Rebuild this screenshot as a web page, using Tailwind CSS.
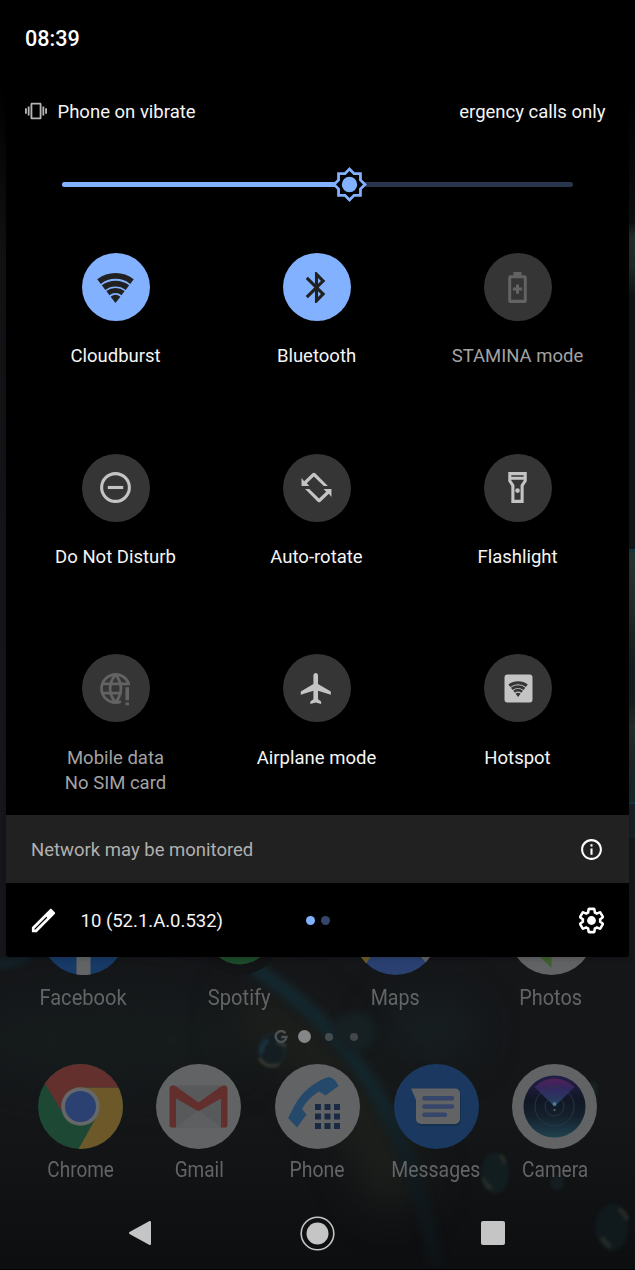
<!DOCTYPE html>
<html lang="en">
  <head>
    <meta charset="UTF-8" />
    <title>Quick Settings</title>
    <meta name="viewport" content="width=device-width, initial-scale=1.0" />
    <script src="https://cdn.jsdelivr.net/npm/@tailwindcss/browser@4"></script>
  </head>

  <body class="bg-black font-[Roboto,sans-serif]">
    <div class="relative w-[635px] h-[1270px] overflow-hidden bg-black">
      <!-- Wallpaper -->
      <svg class="absolute inset-0" width="635" height="1270" viewBox="0 0 635 1270">
        <defs>
          <linearGradient id="base" x1="0" y1="0" x2="0" y2="1">
            <stop offset="0" stop-color="#000" />
            <stop offset="0.06" stop-color="#000" />
            <stop offset="0.2" stop-color="#111214" />
            <stop offset="0.6" stop-color="#15171a" />
            <stop offset="0.88" stop-color="#141618" />
            <stop offset="1" stop-color="#0d0e10" />
          </linearGradient>
          <linearGradient id="streak" gradientUnits="userSpaceOnUse" x1="0" y1="950" x2="0" y2="1270">
            <stop offset="0" stop-color="#14282f" />
            <stop offset="0.5" stop-color="#13242a" />
            <stop offset="0.75" stop-color="#10191d" />
            <stop offset="1" stop-color="#0e1215" />
          </linearGradient>
          <linearGradient id="edge" x1="0" y1="0" x2="0" y2="1">
            <stop offset="0" stop-color="#263430" />
            <stop offset="0.15" stop-color="#232f2c" />
            <stop offset="0.45" stop-color="#151c1f" />
            <stop offset="0.6" stop-color="#161d1f" />
            <stop offset="0.7" stop-color="#222c29" />
            <stop offset="0.85" stop-color="#1a2526" />
            <stop offset="1" stop-color="#17262a" />
          </linearGradient>
          <linearGradient id="edgeTop" x1="0" y1="0" x2="0" y2="1">
            <stop offset="0" stop-color="#202d29" stop-opacity="0" />
            <stop offset="0.2" stop-color="#202d29" />
            <stop offset="0.6" stop-color="#1d2927" />
            <stop offset="1" stop-color="#1d2927" stop-opacity="0" />
          </linearGradient>
          <filter id="soft" x="-50%" y="-50%" width="200%" height="200%" color-interpolation-filters="sRGB"><feGaussianBlur stdDeviation="3.5" /></filter>
          <filter id="haze" x="-50%" y="-100%" width="200%" height="300%" color-interpolation-filters="sRGB"><feGaussianBlur stdDeviation="22" /></filter>
          <filter id="drop" x="-50%" y="-50%" width="200%" height="200%" color-interpolation-filters="sRGB"><feGaussianBlur stdDeviation="1.8" /></filter>
        </defs>
        <rect width="635" height="1270" fill="url(#base)" />
        <ellipse cx="110" cy="1040" rx="150" ry="45" fill="#161b1c" filter="url(#haze)" />
        <path d="M240 1010C310 1030 370 1100 400 1200" stroke="#1d201c" stroke-width="55" fill="none" filter="url(#haze)" />
        <ellipse cx="430" cy="1030" rx="45" ry="30" fill="#182021" filter="url(#haze)" />
        <path d="M235 955C330 1015 405 1090 437 1270" stroke="url(#streak)" stroke-width="15" fill="none" filter="url(#soft)" />
        <path d="M-5 966L30 956" stroke="#132228" stroke-width="10" filter="url(#soft)" />
        <ellipse cx="354" cy="1032" rx="22" ry="20" fill="#162023" filter="url(#soft)" />
        <g filter="url(#drop)" fill="none">
          <ellipse cx="272" cy="1050" rx="13" ry="16" fill="#141d21" stroke="#1b272b" stroke-width="2" />
          <path d="M259 1058q8 12 20 6M277 1042l9 4" stroke="#3c4036" stroke-width="2.500" />
          <path d="M268 1040q-8 7-6 14" stroke="#1a3542" stroke-width="4" />
          <ellipse cx="495" cy="1173" rx="14" ry="21" fill="#121d20" />
          <path d="M483 1178q3 9 9 10M500 1155q5 4 4 9" stroke="#272d28" stroke-width="4" />
          <ellipse cx="557" cy="1182" rx="7" ry="8" fill="#141e20" />
          <ellipse cx="612" cy="1227" rx="17" ry="24" fill="#10191c" />
          <path d="M602 1237q5 9 9 9M619 1209q7 5 8 11" stroke="#242a26" stroke-width="5" />
          <ellipse cx="593" cy="1090" rx="5" ry="9" fill="#182122" />
        </g>
        <!-- strip beside the shade -->
        <rect x="629" y="222" width="6" height="75" fill="url(#edgeTop)" />
        <rect x="629" y="549" width="6" height="3" fill="#14343f" />
        <rect x="629" y="552" width="6" height="250" fill="url(#edge)" />
        <rect x="629" y="802" width="6" height="2" fill="#103643" />
        <rect x="629" y="804" width="6" height="34" fill="#151f24" />
      </svg>

      <!-- Home screen -->
      <div class="relative flex h-full flex-col text-[#626466]">
        <div class="mt-[890px] grid w-[624px] grid-cols-4 ml-[5px]">
          <div class="flex flex-col items-center">
            <svg width="85" height="85" viewBox="0 0 85 85"><circle cx="42.500" cy="42.500" r="42.500" fill="#173a66" /><path d="M35.500 40h14v44.500a42 42 0 0 1-14 0z" fill="#636466" /></svg>
            <span class="mt-[7px] inline-block scale-x-[0.89] text-[22.6px] leading-[32px]">Facebook</span>
          </div>
          <div class="flex flex-col items-center">
            <svg width="85" height="85" viewBox="0 0 85 85"><circle cx="42.500" cy="42.500" r="42.500" fill="#131415" /><circle cx="42.500" cy="42.500" r="32" fill="#1c4b2c" /></svg>
            <span class="mt-[7px] inline-block scale-x-[0.89] text-[22.6px] leading-[32px]">Spotify</span>
          </div>
          <div class="flex flex-col items-center">
            <svg width="85" height="85" viewBox="0 0 85 85">
              <clipPath id="round"><circle cx="42.500" cy="42.500" r="42.500" /></clipPath>
              <g clip-path="url(#round)"><rect width="85" height="85" fill="#2a4070" /><path d="M0 60h22L10 78H0z" fill="#6e5f26" /><path d="M62 60l12 14 11 4V60z" fill="#636466" /></g>
            </svg>
            <span class="mt-[7px] inline-block scale-x-[0.87] text-[22.6px] leading-[32px]">Maps</span>
          </div>
          <div class="flex flex-col items-center">
            <svg width="85" height="85" viewBox="0 0 85 85"><circle cx="42.500" cy="42.500" r="42.500" fill="#616365" /><path d="M42.500 42v36L24 60z" fill="#3f6030" /></svg>
            <span class="mt-[7px] inline-block scale-x-[0.88] text-[22.6px] leading-[32px]">Photos</span>
          </div>
        </div>

        <!-- Page indicator -->
        <div class="mt-[14.5px] ml-[274px] flex h-[16px] items-center">
          <svg width="14" height="14" viewBox="0 0 14 14" fill="none" stroke="#4c5253" stroke-width="2.400"><path d="M11.400 3.200A5.400 5.400 0 1 0 12.500 7H7.200" /></svg>
          <span class="ml-[10px] size-[13px] rounded-full bg-[#858687]"></span>
          <span class="ml-[14px] size-2 rounded-full bg-[#424c50]"></span>
          <span class="ml-[17px] size-2 rounded-full bg-[#424749]"></span>
        </div>

        <!-- Dock -->
        <div class="mt-[19.5px] ml-[21px] grid w-[593px] grid-cols-5">
          <div class="flex flex-col items-center">
            <svg width="85" height="85" viewBox="0 0 85 85">
              <g clip-path="url(#round)">
                <rect width="85" height="85" fill="#1d4834" />
                <path d="M42.500 23.500H85V85H40.500L59 52z" fill="#6c5829" />
                <path d="M7 20L0 0H85V23.500H42.500L23.500 47z" fill="#63302e" />
              </g>
              <circle cx="42.500" cy="42.500" r="19.300" fill="#656769" />
              <circle cx="42.500" cy="42.500" r="15.500" fill="#2b4171" />
            </svg>
            <span class="mt-[5px] inline-block scale-x-[0.84] text-[22.6px] leading-[32px]">Chrome</span>
          </div>
          <div class="flex flex-col items-center">
            <svg width="85" height="85" viewBox="0 0 85 85">
              <circle cx="42.500" cy="42.500" r="42.500" fill="#626365" />
              <rect x="14" y="21.500" width="57" height="42" rx="2" fill="#58595b" />
              <path d="M20 63.500L42.500 46 65 63.500z" fill="#5e5f61" />
              <path d="M13.500 25q0-3.500 3.500-3.500 1.500 0 3 1L42.500 38.600 65 22.500q1.500-1 3-1 3.500 0 3.500 3.500V61a2.500 2.500 0 0 1-2.500 2.500h-4V34.500L42.500 47.300 20 34.500v29h-4a2.500 2.500 0 0 1-2.500-2.500z" fill="#622f2d" />
            </svg>
            <span class="mt-[5px] inline-block scale-x-[0.84] text-[22.6px] leading-[32px]">Gmail</span>
          </div>
          <div class="flex flex-col items-center">
            <svg width="85" height="85" viewBox="0 0 85 85">
              <circle cx="42.500" cy="42.500" r="42.500" fill="#626365" />
              <path d="M13 54L18 44.500Q28 24 49 14.500L54 13Q60 14 63.500 22L50.500 31.500 44 27.500Q33 34 27 45L31.500 50.500 22 63.500z" fill="#24496a" />
              <path d="M40 40h6v6h-6zM49.500 40h6v6h-6zM59 40h6v6h-6zM40 49.500h6v6h-6zM49.500 49.500h6v6h-6zM59 49.500h6v6h-6zM40 59h6v6h-6zM49.500 59h6v6h-6zM59 59h6v6h-6z" fill="#192a42" />
            </svg>
            <span class="mt-[5px] inline-block scale-x-[0.86] text-[22.6px] leading-[32px]">Phone</span>
          </div>
          <div class="flex flex-col items-center">
            <svg width="85" height="85" viewBox="0 0 85 85">
              <circle cx="42.500" cy="42.500" r="42.500" fill="#1b3960" />
              <path d="M18 26.500H62a5 5 0 0 1 5 5V57a5 5 0 0 1-5 5H28a5 5 0 0 1-5-5V37z" fill="#16304f" />
              <path d="M17 24.500H61a5 5 0 0 1 5 5V55a5 5 0 0 1-5 5H27a5 5 0 0 1-5-5V36z" fill="#626365" />
              <path d="M30.500 34.300H58M30.500 42.500H58M30.500 50.700H51" stroke="#36456a" stroke-width="4.600" stroke-linecap="round" />
            </svg>
            <span class="mt-[5px] inline-block scale-x-[0.86] text-[22.6px] leading-[32px]">Messages</span>
          </div>
          <div class="flex flex-col items-center">
            <svg width="85" height="85" viewBox="0 0 85 85">
              <defs>
                <linearGradient id="lens" x1="0" y1="0" x2="0" y2="1"><stop offset="0" stop-color="#241d4b" /><stop offset="0.4" stop-color="#111724" /><stop offset="0.65" stop-color="#14202c" /><stop offset="1" stop-color="#1f414f" /></linearGradient>
                <linearGradient id="beam" x1="0" y1="0" x2="0" y2="1"><stop offset="0" stop-color="#502256" /><stop offset="0.35" stop-color="#342660" /><stop offset="1" stop-color="#204663" /></linearGradient>
              </defs>
              <circle cx="42.500" cy="42.500" r="42.500" fill="#626365" />
              <circle cx="42.500" cy="42.500" r="31" fill="url(#lens)" />
              <path d="M42.500 42.500L22.500 23a28 28 0 0 1 40 0z" fill="url(#beam)" />
              <circle cx="42.500" cy="42.500" r="19.500" fill="none" stroke="#2b3b48" stroke-width="0.800" />
              <circle cx="42.500" cy="42.500" r="9.500" fill="none" stroke="#2b3b48" stroke-width="0.800" />
              <circle cx="42.500" cy="40" r="2" fill="#4d7a91" />
              <circle cx="42.500" cy="46" r="1" fill="#5b6d76" />
            </svg>
            <span class="mt-[5px] inline-block scale-x-[0.845] text-[22.6px] leading-[32px]">Camera</span>
          </div>
        </div>

        <!-- Navigation bar -->
        <div class="mt-[29px] ml-[128px] flex h-[36px] w-[377px] items-center justify-between">
          <svg width="24" height="26" viewBox="0 0 24 26"><path d="M22 2v22L2 13z" fill="#c5c5c5" stroke="#c5c5c5" stroke-width="2" stroke-linejoin="round" /></svg>
          <svg class="ml-[2px]" width="35" height="35" viewBox="0 0 35 35"><circle cx="17.500" cy="17.500" r="16.300" fill="none" stroke="#c5c5c5" stroke-width="1.600" /><circle cx="17.500" cy="17.500" r="11" fill="#c5c5c5" /></svg>
          <span class="size-6 rounded-[2px] bg-[#c5c5c5]"></span>
        </div>
      </div>
      <div class="absolute bottom-0 left-0 h-px w-full bg-black"></div>

      <!-- Notification shade -->
      <div class="absolute top-0 left-[6px] flex h-[957px] w-[623px] flex-col overflow-hidden rounded-b-[3px] bg-black text-[18.5px] text-[#f5f5f5] shadow-md">
        <div class="flex h-[76px] items-center pt-[2px] pl-[19px] text-[21.6px] font-medium text-white">08:39</div>

        <div class="flex h-[71px] items-center pr-[23.5px] pl-[19px]">
          <svg class="mb-[2px]" width="22" height="22" viewBox="0 0 24 24" fill="#b4b4b4"><path d="M0 15h2V9H0v6zm3 2h2V7H3v10zm19-8v6h2V9h-2zm-3 8h2V7h-2v10zM16.500 3h-9C6.670 3 6 3.670 6 4.500v15c0 .83.67 1.500 1.500 1.500h9c.83 0 1.500-.67 1.500-1.500v-15c0-.83-.67-1.500-1.500-1.500zM16 19H8V5h8v14z" /></svg>
          <span class="mt-[2px] ml-[10.5px]">Phone on vibrate</span>
          <span class="mt-[2px] ml-auto">ergency calls only</span>
        </div>

        <!-- Brightness -->
        <div class="flex h-[77px] items-center px-[55.5px] pb-[2px]">
          <div class="relative h-[5px] w-[511.5px] rounded-full bg-[#28354d]">
            <div class="h-[5px] w-[288px] rounded-full bg-[#82b1ff]"></div>
            <svg class="absolute top-[-16px] left-[269.5px]" width="37" height="37" viewBox="0 0 24 24">
              <path d="M20 15.310L23.310 12 20 8.690V4h-4.690L12 .69 8.690 4H4v4.690L.69 12 4 15.310V20h4.690L12 23.310 15.310 20H20z" fill="#82b1ff" />
              <path d="M18.200 14.560V18.200h-3.640L12 20.760 9.440 18.200H5.800v-3.640L3.240 12 5.800 9.440V5.800h3.640L12 3.240l2.560 2.560h3.640v3.640L20.760 12z" fill="#000" />
              <circle cx="12" cy="12" r="5" fill="#82b1ff" />
            </svg>
          </div>
        </div>

        <!-- Tiles -->
        <div class="grid h-[591px] shrink-0 grid-cols-[201px_201px_201px] grid-rows-[200.7px_200.7px_160.6px] pt-[29px] pl-[9px] text-center leading-[25px]">
          <div class="flex flex-col items-center">
            <div class="flex size-[68px] items-center justify-center rounded-full bg-[#82b1ff]">
              <svg width="37" height="37" viewBox="0 0 37 37" fill="none" stroke="#212121">
                <path d="M2 12.600A27 27 0 0 1 35 12.600" stroke-width="5.800" />
                <path d="M6.600 18.600A19.500 19.500 0 0 1 30.400 18.600" stroke-width="5.800" />
                <path d="M10.900 24.100A12.500 12.500 0 0 1 26.100 24.100" stroke-width="5.200" />
                <path d="M18.500 34L13.600 27.700A7.900 7.900 0 0 1 23.400 27.700z" fill="#212121" stroke="none" />
              </svg>
            </div>
            <span class="mt-[23px]">Cloudburst</span>
          </div>
          <div class="flex flex-col items-center">
            <div class="flex size-[68px] items-center justify-center rounded-full bg-[#82b1ff]">
              <svg width="37" height="37" viewBox="0 0 24 24" fill="#212121"><path d="M17.710 7.710L12 2h-1v7.590L6.410 5 5 6.410 10.590 12 5 17.590 6.410 19 11 14.410V22h1l5.710-5.710-4.300-4.290 4.300-4.290zM13 5.830l1.880 1.880L13 9.590V5.830zm1.880 10.460L13 18.170v-3.760l1.880 1.880z" /></svg>
            </div>
            <span class="mt-[23px]">Bluetooth</span>
          </div>
          <div class="flex flex-col items-center">
            <div class="flex size-[68px] items-center justify-center rounded-full bg-[#353535]">
              <svg width="37" height="37" viewBox="0 0 24 24" fill="#636363">
                <path d="M9.400 2h5.200v2h2.100A1.300 1.300 0 0 1 18 5.300v15.400a1.300 1.300 0 0 1-1.300 1.300H7.300A1.300 1.300 0 0 1 6 20.700V5.300A1.300 1.300 0 0 1 7.300 4h2.100zM7.900 6v14h8.200V6z" fill-rule="evenodd" />
                <path d="M11 10h2v2h2v2h-2v2h-2v-2H9v-2h2z" />
              </svg>
            </div>
            <span class="mt-[23px] text-[#a3a3a3]">STAMINA mode</span>
          </div>

          <div class="flex flex-col items-center">
            <div class="flex size-[68px] items-center justify-center rounded-full bg-[#353535]">
              <svg width="37" height="37" viewBox="0 0 24 24" fill="none" stroke="#c4c4c4" stroke-width="2"><circle cx="12" cy="12" r="9" /><path d="M7 12h10" /></svg>
            </div>
            <span class="mt-[23px]">Do Not Disturb</span>
          </div>
          <div class="flex flex-col items-center">
            <div class="flex size-[68px] items-center justify-center rounded-full bg-[#353535]">
              <svg width="37" height="37" viewBox="0 0 24 24" fill="#c4c4c4">
                <path d="M2.300 5.900v5.100h5.100L5.700 9.300 10.300 4.800 16.700 11h2.700L11.200 2.800a1.300 1.300 0 0 0-1.800 0L4 8z" />
                <path d="M21.700 18.100V13h-5.100l1.700 1.700-4.600 4.500L7.300 13H4.600l8.200 8.200a1.300 1.300 0 0 0 1.800 0L20 16z" />
              </svg>
            </div>
            <span class="mt-[23px]">Auto-rotate</span>
          </div>
          <div class="flex flex-col items-center">
            <div class="flex size-[68px] items-center justify-center rounded-full bg-[#353535]">
              <svg width="37" height="37" viewBox="0 0 24 24" fill="#c4c4c4"><path d="M18 2H6v6l2 3v11h8V11l2-3V2zM16 4v1H8V4h8zM14 10.400V20h-4v-9.600l-2-3V7h8v.4l-2 3z" /><circle cx="12" cy="14" r="1.500" /></svg>
            </div>
            <span class="mt-[23px]">Flashlight</span>
          </div>

          <div class="flex flex-col items-center text-[#a3a3a3]">
            <div class="flex size-[68px] items-center justify-center rounded-full bg-[#353535]">
              <svg width="37" height="37" viewBox="0 0 24 24" fill="none" stroke="#636363" stroke-width="1.800">
                <path d="M20.600 9A9.100 9.100 0 1 0 15.600 20.400" />
                <path d="M3.500 9H21.300M3.500 15H16" />
                <path d="M12 3Q8.500 7 8.500 12T12 21Q15.500 17 15.500 12T12 3" />
                <path d="M19.600 11.200v8.400M19.600 21v1.900" stroke-width="2.300" />
              </svg>
            </div>
            <span class="mt-[24px]">Mobile data</span>
            <span>No SIM card</span>
          </div>
          <div class="flex flex-col items-center">
            <div class="flex size-[68px] items-center justify-center rounded-full bg-[#353535]">
              <svg width="37" height="37" viewBox="0 0 24 24" fill="#c4c4c4"><path d="M21.300 16v-2l-8.300-5V3.500c0-.83-.67-1.500-1.500-1.500S10 2.670 10 3.500V9l-8.200 5v2l8.200-2.500V19l-2 1.500V22l3.500-1 3.500 1v-1.500L13 19v-5.500l8.300 2.500z" /></svg>
            </div>
            <span class="mt-[24px]">Airplane mode</span>
          </div>
          <div class="flex flex-col items-center">
            <div class="flex size-[68px] items-center justify-center rounded-full bg-[#353535]">
              <svg width="37" height="37" viewBox="0 0 37 37" fill="none">
                <rect x="5.500" y="4.500" width="28" height="28" rx="3" fill="#c4c4c4" />
                <g transform="translate(9.300 9) scale(0.530)" stroke="#353535">
                  <path d="M2 12.600A27 27 0 0 1 35 12.600" stroke-width="5.800" />
                  <path d="M6.600 18.600A19.500 19.500 0 0 1 30.400 18.600" stroke-width="5.600" />
                  <path d="M10.900 24.100A12.500 12.500 0 0 1 26.100 24.100" stroke-width="5" />
                  <path d="M18.500 34L13.800 27.900A7.700 7.700 0 0 1 23.200 27.900z" fill="#353535" stroke="none" />
                </g>
              </svg>
            </div>
            <span class="mt-[24px]">Hotspot</span>
          </div>
        </div>

        <!-- Monitoring notice -->
        <div class="flex h-[68px] shrink-0 items-center justify-between bg-[#212121] pr-[25px] pl-[25px] text-[#b0b0b0]">
          <span class="mt-[3px]">Network may be monitored</span>
          <svg width="25" height="25" viewBox="0 0 24 24" fill="#fff"><path d="M11 7h2v2h-2zm0 4h2v6h-2zm1-9C6.480 2 2 6.480 2 12s4.480 10 10 10 10-4.480 10-10S17.520 2 12 2zm0 18c-4.410 0-8-3.590-8-8s3.590-8 8-8 8 3.590 8 8-3.590 8-8 8z" /></svg>
        </div>

        <!-- Footer -->
        <div class="flex h-[74px] shrink-0 items-center pl-[21.5px]">
          <svg width="31" height="31" viewBox="0 0 24 24" fill="#fff"><path d="M3 17.250V21h3.750L20.700 7.040c.39-.39.39-1.020 0-1.410l-2.340-2.340c-.39-.39-1.020-.39-1.410 0zM5.700 19H5v-.7L14.200 9.100l.7.7z" fill-rule="evenodd" /></svg>
          <span class="mt-[3px] ml-[22px] w-[225px]">10 (52.1.A.0.532)</span>
          <span class="size-[9px] rounded-full bg-[#82b1ff]"></span>
          <span class="ml-[6px] size-[9px] rounded-full bg-[#34476b]"></span>
          <svg class="mr-[22px] ml-auto" width="31" height="31" viewBox="0 0 24 24" fill="none" stroke="#fff">
            <g transform="translate(1.200 1.200) scale(0.900)" stroke-width="2.200">
              <path d="M19.430 12.980c.04-.32.07-.64.07-.98 0-.34-.03-.66-.07-.98l2.110-1.650c.19-.15.24-.42.12-.64l-2-3.460c-.12-.22-.39-.3-.61-.22l-2.490 1c-.52-.4-1.080-.73-1.690-.98l-.38-2.650C14.460 2.180 14.250 2 14 2h-4c-.25 0-.46.18-.49.42l-.38 2.650c-.61.25-1.170.59-1.690.98l-2.490-1c-.23-.09-.49 0-.61.22l-2 3.460c-.13.22-.07.49.12.64l2.110 1.650c-.04.32-.07.65-.07.98s.03.66.07.98l-2.110 1.650c-.19.15-.24.42-.12.64l2 3.460c.12.22.39.3.61.22l2.490-1c.52.4 1.080.73 1.690.98l.38 2.650c.03.24.24.42.49.42h4c.25 0 .46-.18.49-.42l.38-2.650c.61-.25 1.170-.59 1.690-.98l2.490 1c.23.09.49 0 .61-.22l2-3.460c.12-.22.07-.49-.12-.64l-2.110-1.650z" />
            </g>
            <circle cx="12" cy="12" r="3.400" fill="#fff" stroke="none" />
          </svg>
        </div>
      </div>
    </div>
  </body>
</html>
